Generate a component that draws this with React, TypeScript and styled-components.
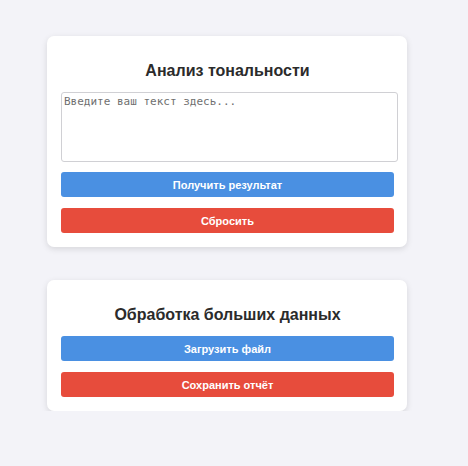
import React from "react";
import styled, { createGlobalStyle } from "styled-components";

const Global = createGlobalStyle`
  html, body { margin: 0; padding: 0; background: #f3f3f8; }
  body { font-family: "Liberation Sans", Arial, sans-serif; }
  * { box-sizing: border-box; }
`;

const Page = styled.div`
  display: flex;
  flex-direction: column;
  gap: 33px;
  padding: 36px 0 0 47px;
`;

const Card = styled.section`
  width: 360px;
  background: #ffffff;
  border-radius: 7px;
  box-shadow: 0 2px 6px rgba(0, 0, 0, 0.12);
  padding: 14px 13px 14px 14px;
  display: flex;
  flex-direction: column;
`;

const Title = styled.h2`
  margin: 10px 0 10px;
  font-size: 16px;
  line-height: 22px;
  font-weight: 700;
  color: #2b2b2b;
  text-align: center;
`;

const TextArea = styled.textarea`
  width: 337px;
  height: 70px;
  border: 1px solid #d0d0d4;
  border-radius: 3px;
  padding: 2px;
  resize: none;
  font-family: "DejaVu Sans Mono", monospace;
  font-size: 11px;
  margin-bottom: 10px;
  &::placeholder { color: #6f6f6f; }
`;

const Button = styled.button<{ $variant: "primary" | "danger" }>`
  width: 333px;
  height: 25px;
  border: none;
  border-radius: 3px;
  background: ${p => (p.$variant === "primary" ? "#4a90e2" : "#e74c3c")};
  color: #ffffff;
  font-family: "Liberation Sans", Arial, sans-serif;
  font-size: 11px;
  font-weight: 700;
  cursor: pointer;
  & + & { margin-top: 11px; }
`;

export default function App() {
  return (
    <>
      <Global />
      <Page>
        <Card>
          <Title>Анализ тональности</Title>
          <TextArea placeholder="Введите ваш текст здесь..." />
          <Button $variant="primary">Получить результат</Button>
          <Button $variant="danger">Сбросить</Button>
        </Card>
        <Card>
          <Title>Обработка больших данных</Title>
          <Button $variant="primary">Загрузить файл</Button>
          <Button $variant="danger">Сохранить отчёт</Button>
        </Card>
      </Page>
    </>
  );
}
